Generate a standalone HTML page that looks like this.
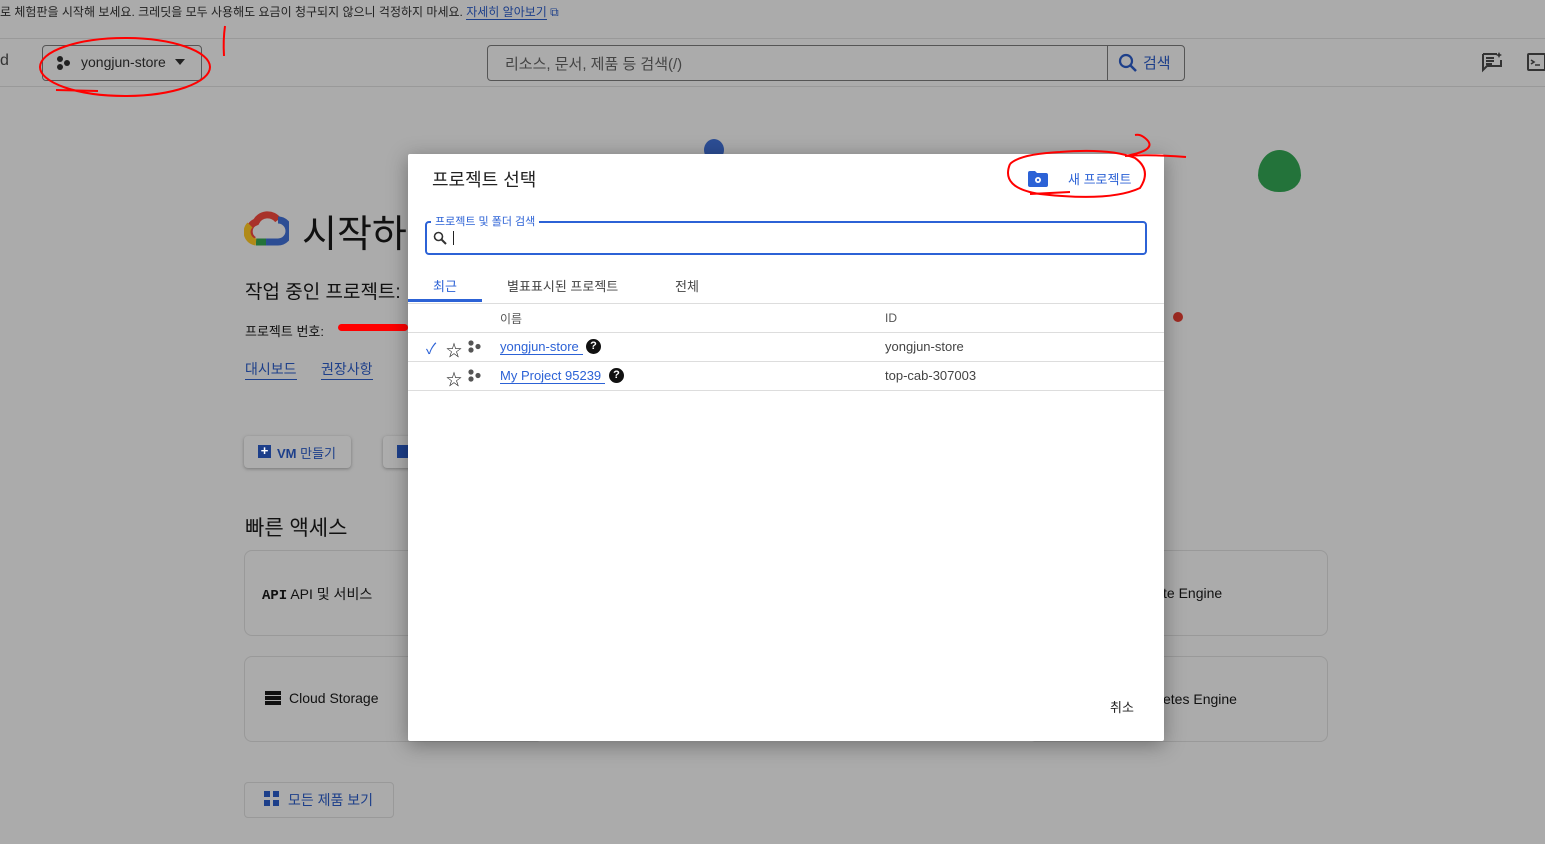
<!DOCTYPE html>
<html><head><meta charset="utf-8"><style>
*{box-sizing:border-box;margin:0;padding:0}
body{width:1545px;height:844px;overflow:hidden;background:#ababab;font-family:"Liberation Sans","Noto Sans CJK KR",sans-serif;color:#1a1a1a;position:relative}
.a{position:absolute}
.blue{color:#1d3f8a}
.card{position:absolute;border:1px solid #999;border-radius:8px;background:#ababab}
</style></head><body>
<div class="a" style="left:0;top:3px;font-size:12px;color:#222;white-space:nowrap">로 체험판을 시작해 보세요. 크레딧을 모두 사용해도 요금이 청구되지 않으니 걱정하지 마세요. <span class="blue" style="border-bottom:1px solid #1d3f8a">자세히 알아보기</span> <span class="blue">⧉</span></div>
<div class="a" style="left:0;top:38px;width:1545px;height:1px;background:#999"></div>
<div class="a" style="left:0;top:86px;width:1545px;height:1px;background:#999"></div>
<div class="a" style="left:0;top:52px;font-size:16px;color:#333">d</div>
<div class="a" style="left:42px;top:45px;width:160px;height:36px;border:1px solid #555;border-radius:4px"></div>
<svg class="a" style="left:56px;top:55px" width="16" height="16"><circle cx="4" cy="4" r="3" fill="#222"/><circle cx="4" cy="12" r="3" fill="#222"/><circle cx="11" cy="8" r="3" fill="#222"/></svg>
<div class="a" style="left:81px;top:54px;font-size:14px;color:#222">yongjun-store</div>
<div class="a" style="left:175px;top:59px;border:5px solid transparent;border-top:6px solid #222"></div>
<svg class="a" style="left:30px;top:20px" width="200" height="80"><path d="M195 6 Q193 20 194 36" stroke="red" stroke-width="2" fill="none"/><ellipse cx="95" cy="47" rx="85" ry="29" stroke="red" stroke-width="2" fill="none"/><path d="M26 70 L68 71" stroke="red" stroke-width="2"/></svg>
<div class="a" style="left:487px;top:45px;width:698px;height:36px;border:1px solid #555;border-radius:4px"></div>
<div class="a" style="left:1107px;top:45px;width:1px;height:36px;background:#555"></div>
<div class="a" style="left:505px;top:53px;font-size:15px;color:#444">리소스, 문서, 제품 등 검색(/)</div>
<svg class="a" style="left:1118px;top:53px" width="20" height="20"><circle cx="8" cy="8" r="6" stroke="#1d3f8a" stroke-width="2.2" fill="none"/><path d="M12.5 12.5 L18 18" stroke="#1d3f8a" stroke-width="2.5"/></svg>
<div class="a blue" style="left:1143px;top:52px;font-size:15px">검색</div>
<svg class="a" style="left:1481px;top:51px" width="22" height="22"><path d="M2 3 h14 M2 3 v16 l4 -4 h14 v-6" stroke="#333" stroke-width="2" fill="none"/><path d="M5 7h8M5 10h8M5 13h6" stroke="#333" stroke-width="2"/><path d="M18 1 l1 2 2 1 -2 1 -1 2 -1 -2 -2 -1 2 -1z" fill="#333"/></svg>
<svg class="a" style="left:1527px;top:53px" width="18" height="18"><rect x="1" y="1" width="17" height="16" rx="1" stroke="#333" stroke-width="2" fill="none"/><path d="M4 7 l3 2 -3 2 M8 12h5" stroke="#333" stroke-width="1.6" fill="none"/></svg>
<div class="a" style="left:704px;top:139px;width:20px;height:22px;border-radius:50%;background:#2c4d94"></div>
<div class="a" style="left:1258px;top:150px;width:43px;height:42px;border-radius:50% 50% 48% 48%/60% 60% 40% 40%;background:#23733a"></div>
<div class="a" style="left:1173px;top:312px;width:10px;height:10px;border-radius:50%;background:#9e2a22"></div>
<svg class="a" style="left:244px;top:210px" width="45" height="38" viewBox="0 0 45 38"><path d="M10 30 A10 10 0 0 1 12 12 A13 13 0 0 1 34 10" stroke="#a8322a" stroke-width="7" fill="none"/><path d="M34 10 A11 11 0 0 1 34 32 H22" stroke="#2c4d94" stroke-width="7" fill="none"/><path d="M22 32 H12" stroke="#23733a" stroke-width="7"/><path d="M12 32 A10 10 0 0 1 6 15" stroke="#b08a18" stroke-width="7" fill="none"/></svg>
<div class="a" style="left:302px;top:203px;font-size:38px;color:#111">시작하</div>
<div class="a" style="left:245px;top:277px;font-size:19px;color:#111">작업 중인 프로젝트:</div>
<div class="a" style="left:245px;top:321px;font-size:13px;color:#111">프로젝트 번호:</div>
<div class="a" style="left:338px;top:324px;width:70px;height:7px;background:red;border-radius:4px"></div>
<div class="a blue" style="left:245px;top:359px;font-size:14px;border-bottom:1px solid #1d3f8a">대시보드</div>
<div class="a blue" style="left:321px;top:359px;font-size:14px;border-bottom:1px solid #1d3f8a">권장사항</div>
<div class="a" style="left:244px;top:436px;width:107px;height:32px;border-radius:4px;background:#adadad;box-shadow:0 1px 3px #777"></div>
<div class="a" style="left:258px;top:445px;width:13px;height:13px;background:#1d3f8a;color:#fff;font-size:13px;line-height:12px;text-align:center;font-weight:bold">+</div>
<div class="a blue" style="left:277px;top:443px;font-size:13px;font-weight:bold">VM <span style="font-weight:normal">만들기</span></div>
<div class="a" style="left:383px;top:436px;width:40px;height:32px;border-radius:4px;background:#adadad;box-shadow:0 1px 3px #777"></div>
<div class="a" style="left:397px;top:445px;width:13px;height:13px;background:#1d3f8a"></div>
<div class="a" style="left:245px;top:512px;font-size:21px;color:#111">빠른 액세스</div>
<div class="card" style="left:244px;top:550px;width:300px;height:86px"></div>
<div class="card" style="left:1028px;top:550px;width:300px;height:86px"></div>
<div class="card" style="left:244px;top:656px;width:300px;height:86px"></div>
<div class="card" style="left:1028px;top:656px;width:300px;height:86px"></div>
<div class="a" style="left:262px;top:584px;font-size:14px;color:#111"><b style="font-family:'Liberation Mono',monospace">API</b> API 및 서비스</div>
<div class="a" style="left:1163px;top:585px;font-size:14px;color:#111">te Engine</div>
<div class="a" style="left:265px;top:691px;width:16px;height:15px;background:repeating-linear-gradient(#111 0 4px,transparent 4px 5px)"></div>
<div class="a" style="left:289px;top:690px;font-size:14px;color:#111">Cloud Storage</div>
<div class="a" style="left:1163px;top:691px;font-size:14px;color:#111">etes Engine</div>
<div class="a" style="left:244px;top:782px;width:150px;height:36px;border:1px solid #999;border-radius:4px"></div>
<svg class="a" style="left:264px;top:791px" width="16" height="16"><rect x="0" y="0" width="6" height="6" fill="#1d3f8a"/><rect x="9" y="0" width="6" height="6" fill="#1d3f8a"/><rect x="0" y="9" width="6" height="6" fill="#1d3f8a"/><rect x="9" y="9" width="6" height="6" fill="#1d3f8a"/></svg>
<div class="a blue" style="left:288px;top:790px;font-size:14px">모든 제품 보기</div>

<div class="a" style="left:408px;top:154px;width:756px;height:587px;background:#fff;box-shadow:0 4px 20px rgba(0,0,0,.35);border-radius:2px"></div>
<div class="a" style="left:432px;top:166px;font-size:18px;color:#222">프로젝트 선택</div>
<svg class="a" style="left:1028px;top:171px" width="20" height="16"><path d="M0 2 Q0 0 2 0 H7 L9 2 H18 Q20 2 20 4 V14 Q20 16 18 16 H2 Q0 16 0 14Z" fill="#2c62d6"/><circle cx="10" cy="9" r="3" fill="#fff"/><circle cx="10" cy="9" r="1.2" fill="#2c62d6"/></svg>
<div class="a" style="left:1068px;top:169px;font-size:13px;color:#2c62d6">새 프로젝트</div>
<svg class="a" style="left:1000px;top:130px" width="190" height="72"><path d="M10 34 Q0 58 40 64 Q110 72 140 58 Q152 40 135 28 Q110 18 60 22 Q20 24 10 34" stroke="red" stroke-width="2" fill="none"/><path d="M125 26 Q160 20 145 8 Q140 4 135 5 M125 26 Q150 24 186 27" stroke="red" stroke-width="2" fill="none"/><path d="M30 64 L70 62" stroke="red" stroke-width="2"/></svg>
<div class="a" style="left:425px;top:221px;width:722px;height:34px;border:2px solid #2c62d6;border-radius:4px"></div>
<div class="a" style="left:431px;top:213px;font-size:11px;color:#2c62d6;background:#fff;padding:0 4px">프로젝트 및 폴더 검색</div>
<svg class="a" style="left:433px;top:231px" width="14" height="14"><circle cx="5.5" cy="5.5" r="4" stroke="#333" stroke-width="1.6" fill="none"/><path d="M8.5 8.5 L13 13" stroke="#333" stroke-width="2"/></svg>
<div class="a" style="left:453px;top:231px;width:1px;height:14px;background:#222"></div>
<div class="a" style="left:433px;top:276px;font-size:13px;color:#2c62d6">최근</div>
<div class="a" style="left:408px;top:299px;width:74px;height:3px;background:#2c62d6"></div>
<div class="a" style="left:507px;top:276px;font-size:13px;color:#444">별표표시된 프로젝트</div>
<div class="a" style="left:675px;top:276px;font-size:13px;color:#444">전체</div>
<div class="a" style="left:408px;top:303px;width:756px;height:1px;background:#ddd"></div>
<div class="a" style="left:500px;top:310px;font-size:12px;color:#555">이름</div>
<div class="a" style="left:885px;top:311px;font-size:12px;color:#555">ID</div>
<div class="a" style="left:408px;top:332px;width:756px;height:1px;background:#ddd"></div>
<div class="a" style="left:408px;top:361px;width:756px;height:1px;background:#ddd"></div>
<div class="a" style="left:408px;top:390px;width:756px;height:1px;background:#ddd"></div>
<div class="a" style="left:426px;top:338px;font-size:15px;color:#2c62d6">✓</div>
<div class="a" style="left:446px;top:337px;font-size:16px;color:#222">☆</div>
<div class="a" style="left:446px;top:366px;font-size:16px;color:#222">☆</div>
<svg class="a" style="left:468px;top:340px" width="14" height="14"><circle cx="3" cy="3" r="2.6" fill="#555"/><circle cx="3" cy="10" r="2.6" fill="#555"/><circle cx="10" cy="6.5" r="2.6" fill="#555"/></svg>
<svg class="a" style="left:468px;top:369px" width="14" height="14"><circle cx="3" cy="3" r="2.6" fill="#555"/><circle cx="3" cy="10" r="2.6" fill="#555"/><circle cx="10" cy="6.5" r="2.6" fill="#555"/></svg>
<div class="a" style="left:500px;top:339px;font-size:13px;color:#2c62d6;border-bottom:1px solid #2c62d6;padding-right:4px">yongjun-store</div>
<div class="a" style="left:586px;top:339px;width:15px;height:15px;border-radius:50%;background:#111;color:#fff;font-size:11px;text-align:center;line-height:15px;font-weight:bold">?</div>
<div class="a" style="left:500px;top:368px;font-size:13px;color:#2c62d6;border-bottom:1px solid #2c62d6;padding-right:4px">My Project 95239</div>
<div class="a" style="left:609px;top:368px;width:15px;height:15px;border-radius:50%;background:#111;color:#fff;font-size:11px;text-align:center;line-height:15px;font-weight:bold">?</div>
<div class="a" style="left:885px;top:339px;font-size:13px;color:#444">yongjun-store</div>
<div class="a" style="left:885px;top:368px;font-size:13px;color:#444">top-cab-307003</div>
<div class="a" style="left:1110px;top:697px;font-size:13px;color:#222">취소</div>
</body></html>
